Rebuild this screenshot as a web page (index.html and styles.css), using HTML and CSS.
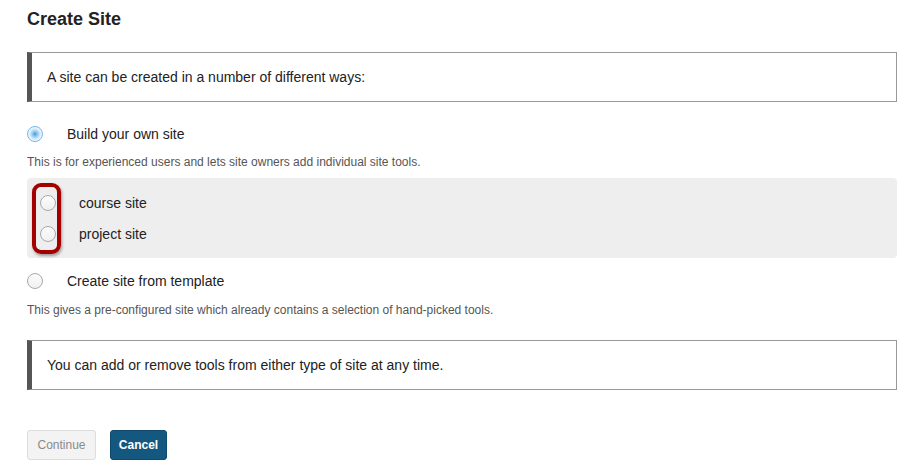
FILE: index.html
```html
<!DOCTYPE html>
<html>
<head>
<meta charset="utf-8">
<title>Create Site</title>
<link rel="stylesheet" href="styles.css">
</head>
<body>
<div class="page">
  <h1 class="title">Create Site</h1>
  <div class="note">A site can be created in a number of different ways:</div>

  <label class="opt opt-first">
    <input type="radio" name="kind" class="radio" checked>
    <span class="opt-label">Build your own site</span>
  </label>
  <p class="desc">This is for experienced users and lets site owners add individual site tools.</p>

  <div class="panel">
    <label class="sub">
      <input type="radio" name="type" class="radio">
      <span class="sub-label">course site</span>
    </label>
    <label class="sub sub-second">
      <input type="radio" name="type" class="radio">
      <span class="sub-label">project site</span>
    </label>
    <div class="highlight"></div>
  </div>

  <label class="opt opt-template">
    <input type="radio" name="kind" class="radio">
    <span class="opt-label">Create site from template</span>
  </label>
  <p class="desc desc-template">This gives a pre-configured site which already contains a selection of hand-picked tools.</p>

  <div class="note note-second">You can add or remove tools from either type of site at any time.</div>

  <div class="actions">
    <button class="btn btn-disabled" disabled>Continue</button>
    <button class="btn btn-primary">Cancel</button>
  </div>
</div>
</body>
</html>
```

FILE: styles.css
```css
html, body {
  margin: 0;
  padding: 0;
  background: #fff;
}
body {
  font-family: "Liberation Sans", Arial, sans-serif;
  color: #222;
  font-size: 14px;
}
.page {
  padding: 0 10px 0 27px;
}
.title {
  margin: 0;
  padding-top: 9px;
  font-size: 18px;
  line-height: 20px;
  font-weight: bold;
  color: #222;
}
.note {
  margin-top: 23px;
  border: 1px solid #999;
  border-left: 5px solid #555;
  padding: 14px 15px;
  line-height: 20px;
  font-size: 14px;
  color: #222;
}
.note-second {
  margin-top: 22px;
}
.opt {
  display: flex;
  align-items: center;
  height: 20px;
  margin-top: 22px;
}
.opt-template {
  margin-top: 13px;
}
.radio {
  -webkit-appearance: none;
  appearance: none;
  margin: 0;
  width: 16px;
  height: 16px;
  border-radius: 50%;
  border: 1px solid #a9a9a9;
  background: linear-gradient(#fcfcfc, #f0f0f0);
  box-sizing: border-box;
  flex: none;
}
.radio:checked {
  border-color: #74b4e6;
  background: radial-gradient(circle, #3d9be0 0, #7fc0ee 2px, #d4e9f9 5px, #f6fbff 7px);
}
.opt-label {
  margin-left: 24px;
  line-height: 20px;
}
.desc {
  margin: 10px 0 0;
  font-size: 12px;
  line-height: 16px;
  color: #555;
}
.desc-template {
  margin-top: 11px;
}
.panel {
  position: relative;
  margin-top: 8px;
  background: #eee;
  border-radius: 4px;
  padding: 15px 13px 14px;
}
.sub {
  display: flex;
  align-items: center;
  height: 20px;
}
.sub-second {
  margin-top: 11px;
}
.sub-label {
  margin-left: 23px;
  line-height: 20px;
}
.highlight {
  position: absolute;
  left: 5px;
  top: 5px;
  width: 29px;
  height: 71px;
  box-sizing: border-box;
  border: 4px solid #a50000;
  border-radius: 9px;
  box-shadow: 1px 2px 3px rgba(0, 0, 0, 0.35);
  pointer-events: none;
}
.actions {
  display: flex;
  gap: 14px;
  margin-top: 40px;
}
.btn {
  height: 30px;
  font-family: "Liberation Sans", Arial, sans-serif;
  font-size: 12px;
  border-radius: 3px;
  box-sizing: border-box;
  margin: 0;
}
.btn-disabled {
  width: 69px;
  background: #f3f3f3;
  border: 1px solid #ddd;
  color: #8a8a8a;
}
.btn-primary {
  width: 57px;
  background: #15587f;
  border: 1px solid #0f4a6c;
  color: #fff;
  font-weight: bold;
}
```
